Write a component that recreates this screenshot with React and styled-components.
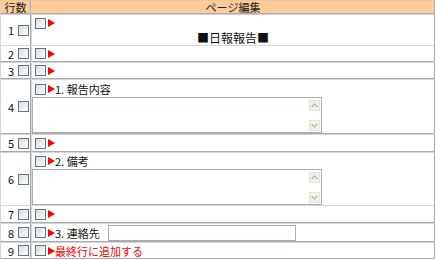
import React from "react";
import styled, { createGlobalStyle } from "styled-components";

const GlobalStyle = createGlobalStyle`
  html, body { margin: 0; padding: 0; background: #ffffff; }
  body {
    font-family: "Noto Sans CJK JP", "Liberation Sans", sans-serif;
    font-size: 11px;
    color: #111;
  }
  * { box-sizing: border-box; }
`;

const Table = styled.div`
  width: 435px;
  display: flex;
  flex-direction: column;
`;

const Row = styled.div`
  display: grid;
  grid-template-columns: 31px 1fr;
  height: ${(p) => p.$h}px;
`;

const Cell = styled.div`
  border: 1px solid;
  border-color: #d6d6d6 #a9a9a9 #a9a9a9 #d6d6d6;
  min-width: 0;
`;

const HeadCell = styled(Cell)`
  background: #ffcc99;
  display: flex;
  align-items: center;
  justify-content: center;
  line-height: 12px;
  color: #222;
  border-color: #e8c8a8 #b5b0aa #a9a9a9 #d6d6d6;
`;

const NumCell = styled(Cell)`
  display: flex;
  align-items: center;
  justify-content: flex-end;
  gap: 4px;
  padding-right: 1px;
  line-height: 12px;
`;

const ContentCell = styled(Cell)`
  display: flex;
  flex-direction: column;
  justify-content: ${(p) => (p.$center ? "center" : "flex-start")};
  padding-top: ${(p) => (p.$center ? 0 : p.$pt || 1)}px;
`;

const Line = styled.div`
  display: flex;
  align-items: center;
  height: 14px;
  padding-left: 3px;
  white-space: nowrap;
  color: ${(p) => (p.$red ? "#ff0000" : "#111")};
`;

const Box = styled.span`
  display: inline-block;
  width: 11px;
  height: 11px;
  border: 1px solid #5a7896;
  background: linear-gradient(135deg, #dcdbd4 0%, #f1f0ea 60%, #ffffff 100%);
  flex: none;
`;

const Arrow = styled.svg`
  width: 7px;
  height: 8px;
  margin-left: 2px;
  flex: none;
`;

const Title = styled.div`
  text-align: center;
  font-size: 12px;
  line-height: 14px;
  margin-top: 1px;
  color: #111;
`;

const AreaWrap = styled.div`
  display: flex;
  width: 290px;
  height: 36px;
  margin-top: 1px;
  border: 1px solid #a7adb3;
  background: #fff;
`;

const Area = styled.textarea`
  flex: 1;
  border: none;
  outline: none;
  resize: none;
  overflow: hidden;
  padding: 1px 2px;
  font-family: inherit;
  font-size: 11px;
  background: transparent;
`;

const Scroll = styled.div`
  width: 13px;
  display: flex;
  flex-direction: column;
  justify-content: space-between;
  padding: 2px 1px 1px 1px;
`;

const ScrollBtn = styled.div`
  width: 11px;
  height: 11px;
  background: #f2f1ea;
  border: 1px solid #e6e4da;
  display: flex;
  align-items: center;
  justify-content: center;
`;

const TextInput = styled.input`
  width: 188px;
  height: 16px;
  margin-left: 8px;
  border: 1px solid #a7adb3;
  outline: none;
  padding: 0 2px;
  font-family: inherit;
  font-size: 11px;
`;

const Tri = () => (
  <Arrow viewBox="0 0 7 8">
    <polygon points="0,0 7,4 0,8" fill="#ff0000" />
  </Arrow>
);

const Chevron = ({ up }) => (
  <svg width="7" height="5" viewBox="0 0 7 5">
    <polyline
      points={up ? "0.5,4 3.5,1 6.5,4" : "0.5,1 3.5,4 6.5,1"}
      fill="none"
      stroke="#b4b4ae"
      strokeWidth="1.2"
    />
  </svg>
);

const Memo = ({ focus }) => (
  <AreaWrap>
    <Area autoFocus={focus} />
    <Scroll>
      <ScrollBtn>
        <Chevron up />
      </ScrollBtn>
      <ScrollBtn>
        <Chevron />
      </ScrollBtn>
    </Scroll>
  </AreaWrap>
);

const Num = ({ n }) => (
  <NumCell>
    <span>{n}</span>
    <Box />
  </NumCell>
);

const Head = ({ label, red, children }) => (
  <Line $red={red}>
    <Box />
    <Tri />
    {label}
    {children}
  </Line>
);

export default function App() {
  return (
    <>
      <GlobalStyle />
      <Table>
        <Row $h={14}>
          <HeadCell>行数</HeadCell>
          <HeadCell>ページ編集</HeadCell>
        </Row>
        <Row $h={31}>
          <Num n={1} />
          <ContentCell>
            <Head />
            <Title>■日報報告■</Title>
          </ContentCell>
        </Row>
        <Row $h={17}>
          <Num n={2} />
          <ContentCell $center>
            <Head />
          </ContentCell>
        </Row>
        <Row $h={17}>
          <Num n={3} />
          <ContentCell $center>
            <Head />
          </ContentCell>
        </Row>
        <Row $h={55}>
          <Num n={4} />
          <ContentCell $pt={2}>
            <Head label="1. 報告内容" />
            <Memo focus />
          </ContentCell>
        </Row>
        <Row $h={18}>
          <Num n={5} />
          <ContentCell $center>
            <Head />
          </ContentCell>
        </Row>
        <Row $h={53}>
          <Num n={6} />
          <ContentCell $pt={1}>
            <Head label="2. 備考" />
            <Memo />
          </ContentCell>
        </Row>
        <Row $h={18}>
          <Num n={7} />
          <ContentCell $center>
            <Head />
          </ContentCell>
        </Row>
        <Row $h={19}>
          <Num n={8} />
          <ContentCell $center>
            <Head label="3. 連絡先">
              <TextInput />
            </Head>
          </ContentCell>
        </Row>
        <Row $h={17}>
          <Num n={9} />
          <ContentCell $center>
            <Head label="最終行に追加する" red />
          </ContentCell>
        </Row>
      </Table>
    </>
  );
}
